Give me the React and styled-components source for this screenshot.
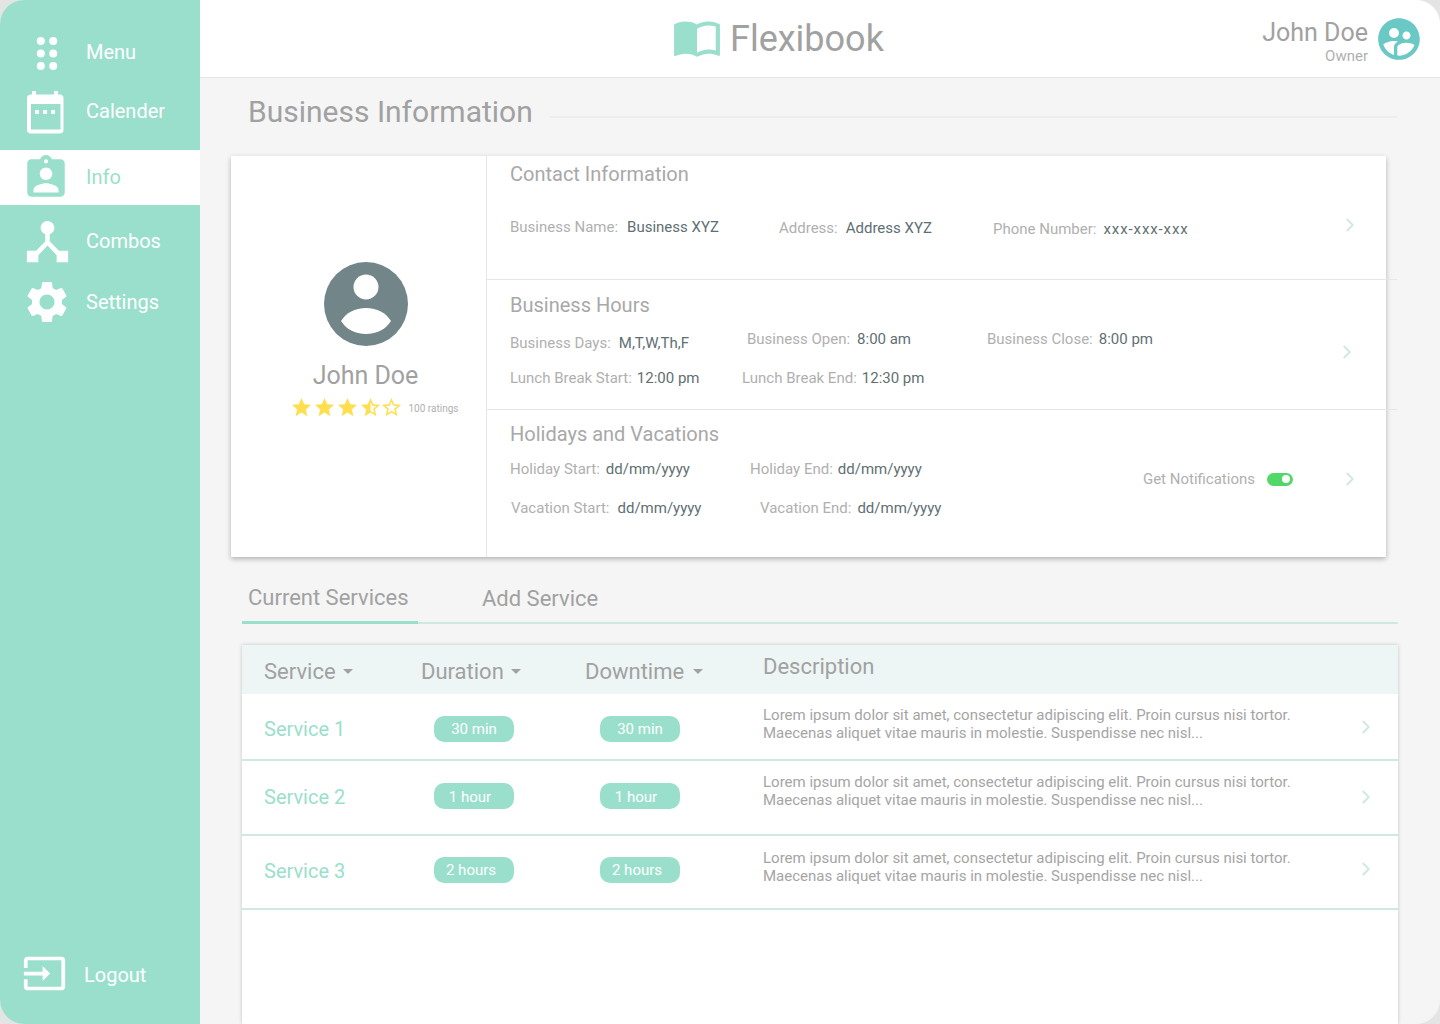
import React from 'react';
import styled, { createGlobalStyle } from 'styled-components';
import {
  MdAssignmentInd,
  MdDeviceHub,
  MdSettings,
  MdInput,
  MdImportContacts,
  MdSupervisedUserCircle,
  MdStar,
  MdStarHalf,
  MdStarBorder,
} from 'react-icons/md';
import { FiChevronRight } from 'react-icons/fi';

const mint = '#9adfcb';
const line = '#cfe9e2';
const heading = '#a1a1a1';
const label = '#b0b0b0';

const GlobalStyle = createGlobalStyle`
  html, body {
    margin: 0;
    background: #e4e4e4;
  }
  * {
    box-sizing: border-box;
  }
`;

const Frame = styled.div`
  display: flex;
  width: 1440px;
  height: 1024px;
  overflow: hidden;
  border-radius: 24px;
  font-family: Roboto, "Liberation Sans", sans-serif;
  background: #f5f5f5;
`;

const Sidebar = styled.nav`
  display: flex;
  flex-direction: column;
  flex: none;
  width: 200px;
  padding: 22px 0 32px;
  background: ${mint};
`;

const NavItem = styled.div`
  display: flex;
  align-items: center;
  height: ${p => p.$h}px;
  margin-top: ${p => p.$mt || 0}px;
  padding-left: 26px;
  padding-bottom: ${p => p.$pb || 0}px;
  font-size: 20px;
  color: ${p => (p.$active ? mint : '#fff')};
  background: ${p => (p.$active ? '#fff' : 'transparent')};
`;

const LogoutItem = styled(NavItem)`
  margin-top: auto;
  padding-left: 24px;
`;

const IconSlot = styled.span`
  display: flex;
  align-items: center;
  justify-content: center;
  flex: none;
  width: 40px;
  height: 40px;
  margin-right: 20px;
  svg {
    flex: none;
    transform: translate(${p => p.$dx || 0}px, ${p => p.$dy || 0}px);
  }
`;

const Main = styled.div`
  display: flex;
  flex-direction: column;
  flex: 1;
  min-width: 0;
`;

const Header = styled.header`
  display: flex;
  align-items: center;
  flex: none;
  height: 78px;
  padding: 0 20px 0 472px;
  background: #fff;
  border-bottom: 1px solid #e6e6e6;
`;

const Logo = styled.div`
  display: flex;
  align-items: center;
  gap: 8px;
  font-size: 36px;
  color: ${heading};
  svg {
    margin-top: -4px;
    color: ${mint};
  }
`;

const User = styled.div`
  display: flex;
  align-items: center;
  gap: 10px;
  margin-left: auto;
  color: ${heading};
  svg {
    margin: 0 -4px;
    color: #6ac9c4;
  }
`;

const UserText = styled.div`
  padding-top: 6px;
  text-align: right;
`;

const UserName = styled.div`
  font-size: 25px;
  line-height: 28px;
`;

const UserRole = styled.div`
  margin-top: 1px;
  font-size: 15px;
  line-height: 16px;
  color: ${label};
`;

const TitleRow = styled.div`
  display: flex;
  align-items: center;
  gap: 17px;
  margin: 15px 43px 0 48px;
  height: 36px;
`;

const Title = styled.h1`
  margin: 0;
  font-size: 30px;
  font-weight: 400;
  color: ${heading};
  white-space: nowrap;
`;

const TitleRule = styled.div`
  flex: 1;
  height: 2px;
  margin-top: 12px;
  background: #eeeeee;
`;

const Card = styled.section`
  display: flex;
  flex: none;
  width: 1155px;
  height: 401px;
  margin: 27px 0 0 31px;
  background: #fff;
  box-shadow: 0 2px 5px rgba(0, 0, 0, 0.28);
`;

const Profile = styled.div`
  display: flex;
  flex-direction: column;
  align-items: center;
  flex: none;
  width: 256px;
  padding: 106px 0 0 14px;
  border-right: 1px solid #e6e6e6;
`;

const ProfileName = styled.div`
  margin-top: 14px;
  font-size: 25px;
  line-height: 32px;
  color: ${heading};
`;

const Rating = styled.div`
  display: flex;
  align-items: center;
  margin-top: 4px;
  padding-left: 17px;
  color: #ffdf4f;
`;

const RatingCount = styled.span`
  margin: 2px 0 0 6px;
  font-size: 10px;
  color: ${label};
`;

const LastStar = styled(MdStarBorder)`
  margin-left: -2px;
`;

const Sections = styled.div`
  display: flex;
  flex-direction: column;
  flex: 1;
  min-width: 0;
`;

const InfoSection = styled.div`
  display: flex;
  flex: none;
  height: ${p => p.$h}px;
  padding: ${p => p.$top}px 0 0 23px;
  margin-right: ${p => (p.$last ? 0 : -11)}px;
  padding-right: ${p => (p.$last ? 0 : 11)}px;
  border-bottom: ${p => (p.$last ? 'none' : '1px solid #e6e6e6')};
`;

const SectionBody = styled.div`
  flex: 1;
  min-width: 0;
`;

const SectionTitle = styled.h2`
  margin: 0 0 ${p => p.$gap}px;
  font-size: 20px;
  font-weight: 400;
  line-height: 24px;
  color: #a8a8a8;
`;

const FieldRow = styled.div`
  display: flex;
  align-items: flex-start;
  height: 39px;
  padding-left: ${p => p.$indent || 0}px;
`;

const Field = styled.div`
  flex: none;
  width: ${p => (p.$w ? `${p.$w}px` : 'auto')};
  margin-top: ${p => p.$top || 0}px;
  font-size: 15px;
  line-height: 20px;
  color: ${label};
`;

const FieldValue = styled.span`
  margin-left: ${p => p.$gap || 8}px;
  letter-spacing: ${p => p.$spread || 0}px;
  color: #5f6f73;
`;

const Notify = styled.div`
  display: flex;
  align-items: center;
  height: 20px;
  margin-top: 47px;
  font-size: 15px;
  color: ${label};
`;

const Toggle = styled.span`
  position: relative;
  width: 26px;
  height: 13px;
  margin-left: 12px;
  border-radius: 7px;
  background: #53d769;
  &::after {
    content: '';
    position: absolute;
    top: 2.5px;
    right: 3px;
    width: 8px;
    height: 8px;
    border-radius: 50%;
    background: #fff;
  }
`;

const Chevron = styled(FiChevronRight)`
  flex: none;
  margin: ${p => p.$top}px ${p => p.$right}px 0 ${p => p.$left}px;
  color: ${line};
`;

const Tabs = styled.div`
  display: flex;
  flex: none;
  width: 1156px;
  height: 46px;
  margin: 21px 0 0 42px;
  border-bottom: 2px solid ${line};
`;

const Tab = styled.div`
  width: ${p => p.$w}px;
  height: 46px;
  padding: ${p => (p.$active ? '7px' : '8px')} 0 0 ${p => p.$pad}px;
  font-size: 22px;
  line-height: 26px;
  color: ${heading};
  border-bottom: ${p => (p.$active ? `3px solid ${mint}` : 'none')};
`;

const Table = styled.div`
  flex: 1;
  width: 1156px;
  margin: 21px 0 0 42px;
  background: #fff;
  box-shadow: 0 0 4px rgba(0, 0, 0, 0.2);
`;

const TableHead = styled.div`
  display: grid;
  grid-template-columns: 157px 164px 178px 1fr;
  align-items: center;
  height: 49px;
  padding-left: 22px;
  font-size: 22px;
  color: ${heading};
  background: #eef6f5;
`;

const HeadCell = styled.div`
  display: flex;
  align-items: center;
  gap: ${p => p.$gap || 7}px;
  padding: ${p => p.$top || 0}px 0 ${p => p.$bottom || 0}px;
  &::after {
    content: ${p => (p.$plain ? 'none' : "''")};
    border: 5px solid transparent;
    border-top-color: ${heading};
    border-bottom: 0;
  }
`;

const TableRow = styled.div`
  display: grid;
  grid-template-columns: 170px 166px 163px 1fr 22px;
  align-items: start;
  height: ${p => p.$h}px;
  padding: ${p => p.$top}px 21px 0 22px;
  border-bottom: 2px solid ${line};
`;

const ServiceName = styled.div`
  margin-top: ${p => p.$top}px;
  font-size: 20px;
  line-height: 26px;
  color: ${mint};
`;

const Pill = styled.div`
  width: 80px;
  height: 26px;
  padding-right: ${p => p.$nudge}px;
  font-size: 15px;
  line-height: ${p => (p.$low ? 28 : 26)}px;
  text-align: center;
  color: #fff;
  border-radius: 10px;
  background: ${mint};
`;

const Description = styled.div`
  margin-top: ${p => p.$top}px;
  font-size: 15px;
  line-height: 18px;
  color: #a5a5a5;
`;

const RowChevron = styled(FiChevronRight)`
  margin-top: ${p => p.$top}px;
  color: ${line};
`;

const MenuDots = () => (
  <svg width="40" height="40" viewBox="0 0 40 40" fill="#fff">
    {[14.8, 27.2].map(x =>
      [9, 21.5, 34].map(y => <circle key={`${x}-${y}`} cx={x} cy={y} r="4" />),
    )}
  </svg>
);

const CalendarIcon = () => (
  <svg width="40" height="44" viewBox="0 0 40 44" fill="#fff">
    <path d="M2 7c0-2 1.500-3.500 3.500-3.500H7V0h4v3.500h18V0h4v3.500h2c2 0 3.500 1.500 3.500 3.500v32c0 2-1.500 3.500-3.500 3.500H5.500C3.500 42.500 2 41 2 39zm4 6v25.500h29.500V13z" />
    <rect x="10" y="19" width="4" height="4" />
    <rect x="18" y="19" width="4" height="4" />
    <rect x="26" y="19" width="4" height="4" />
  </svg>
);

const ProfileAvatar = () => (
  <svg width="84" height="84" viewBox="0 0 84 84">
    <circle cx="42" cy="42" r="42" fill="#728589" />
    <circle cx="42" cy="25" r="12.500" fill="#fff" />
    <path d="M17 59C22 51 31 46 42 46C53 46 62 51 67 59C62 67 53 72 42 72C31 72 22 67 17 59Z" fill="#fff" />
  </svg>
);

const services = [
  { name: 'Service 1', duration: '30 min', nudge: 0, low: false, h: 67, top: 22, nameTop: 0, descTop: -10, chevTop: 0 },
  { name: 'Service 2', duration: '1 hour', nudge: 8, low: true, h: 75, top: 22, nameTop: 1, descTop: -10, chevTop: 3 },
  { name: 'Service 3', duration: '2 hours', nudge: 6, low: false, h: 74, top: 21, nameTop: 1, descTop: -8, chevTop: 1 },
];

export default function App() {
  return (
    <Frame>
      <GlobalStyle />
      <Sidebar>
        <NavItem $h={60}>
          <IconSlot><MenuDots /></IconSlot>
          Menu
        </NavItem>
        <NavItem $h={58}>
          <IconSlot $dx={-1} $dy={2}><CalendarIcon /></IconSlot>
          Calender
        </NavItem>
        <NavItem $h={55} $mt={10} $pb={2} $active>
          <IconSlot $dy={1}><MdAssignmentInd size={50} /></IconSlot>
          Info
        </NavItem>
        <NavItem $h={72}>
          <IconSlot $dx={1}><MdDeviceHub size={55} /></IconSlot>
          Combos
        </NavItem>
        <NavItem $h={50}>
          <IconSlot $dx={1}><MdSettings size={50} /></IconSlot>
          Settings
        </NavItem>
        <LogoutItem $h={34}>
          <IconSlot $dy={-2}><MdInput size={45} /></IconSlot>
          Logout
        </LogoutItem>
      </Sidebar>
      <Main>
        <Header>
          <Logo>
            <MdImportContacts size={50} />
            Flexibook
          </Logo>
          <User>
            <UserText>
              <UserName>John Doe</UserName>
              <UserRole>Owner</UserRole>
            </UserText>
            <MdSupervisedUserCircle size={50} />
          </User>
        </Header>
        <TitleRow>
          <Title>Business Information</Title>
          <TitleRule />
        </TitleRow>
        <Card>
          <Profile>
            <ProfileAvatar />
            <ProfileName>John Doe</ProfileName>
            <Rating>
              <MdStar size={23} />
              <MdStar size={23} />
              <MdStar size={23} />
              <MdStarHalf size={23} />
              <LastStar size={23} />
              <RatingCount>100 ratings</RatingCount>
            </Rating>
          </Profile>
          <Sections>
            <InfoSection $h={124} $top={6}>
              <SectionBody>
                <SectionTitle $gap={31}>Contact Information</SectionTitle>
                <FieldRow>
                  <Field $w={269}>Business Name:<FieldValue $gap={9}>Business XYZ</FieldValue></Field>
                  <Field $w={214} $top={1}>Address:<FieldValue>Address XYZ</FieldValue></Field>
                  <Field $top={2}>Phone Number:<FieldValue $gap={7} $spread={0.9}>xxx-xxx-xxx</FieldValue></Field>
                </FieldRow>
              </SectionBody>
              <Chevron size={22} $top={52} $right={25} $left={0} />
            </InfoSection>
            <InfoSection $h={130} $top={13}>
              <SectionBody>
                <SectionTitle $gap={12}>Business Hours</SectionTitle>
                <FieldRow>
                  <Field $w={237} $top={4}>Business Days:<FieldValue>M,T,W,Th,F</FieldValue></Field>
                  <Field $w={240}>Business Open:<FieldValue $gap={7}>8:00 am</FieldValue></Field>
                  <Field>Business Close:<FieldValue $gap={6}>8:00 pm</FieldValue></Field>
                </FieldRow>
                <FieldRow>
                  <Field $w={232}>Lunch Break Start:<FieldValue $gap={5}>12:00 pm</FieldValue></Field>
                  <Field>Lunch Break End:<FieldValue $gap={5}>12:30 pm</FieldValue></Field>
                </FieldRow>
              </SectionBody>
              <Chevron size={22} $top={48} $right={28} $left={0} />
            </InfoSection>
            <InfoSection $h={147} $top={12} $last>
              <SectionBody>
                <SectionTitle $gap={13}>Holidays and Vacations</SectionTitle>
                <FieldRow>
                  <Field $w={240}>Holiday Start:<FieldValue $gap={6}>dd/mm/yyyy</FieldValue></Field>
                  <Field>Holiday End:<FieldValue $gap={5}>dd/mm/yyyy</FieldValue></Field>
                </FieldRow>
                <FieldRow $indent={1}>
                  <Field $w={249}>Vacation Start:<FieldValue>dd/mm/yyyy</FieldValue></Field>
                  <Field>Vacation End:<FieldValue $gap={6}>dd/mm/yyyy</FieldValue></Field>
                </FieldRow>
              </SectionBody>
              <Notify>
                Get Notifications
                <Toggle />
              </Notify>
              <Chevron size={22} $top={46} $right={25} $left={46} />
            </InfoSection>
          </Sections>
        </Card>
        <Tabs>
          <Tab $active $w={176} $pad={6}>Current Services</Tab>
          <Tab $w={300} $pad={64}>Add Service</Tab>
        </Tabs>
        <Table>
          <TableHead>
            <HeadCell $top={4}>Service</HeadCell>
            <HeadCell $top={4}>Duration</HeadCell>
            <HeadCell $top={4} $gap={9}>Downtime</HeadCell>
            <HeadCell $plain $bottom={6}>Description</HeadCell>
          </TableHead>
          {services.map(s => (
            <TableRow key={s.name} $h={s.h} $top={s.top}>
              <ServiceName $top={s.nameTop}>{s.name}</ServiceName>
              <Pill $nudge={s.nudge} $low={s.low}>{s.duration}</Pill>
              <Pill $nudge={s.nudge} $low={s.low}>{s.duration}</Pill>
              <Description $top={s.descTop}>
                Lorem ipsum dolor sit amet, consectetur adipiscing elit. Proin cursus nisi tortor.<br />
                Maecenas aliquet vitae mauris in molestie. Suspendisse nec nisl...
              </Description>
              <RowChevron size={22} $top={s.chevTop} />
            </TableRow>
          ))}
        </Table>
      </Main>
    </Frame>
  );
}
